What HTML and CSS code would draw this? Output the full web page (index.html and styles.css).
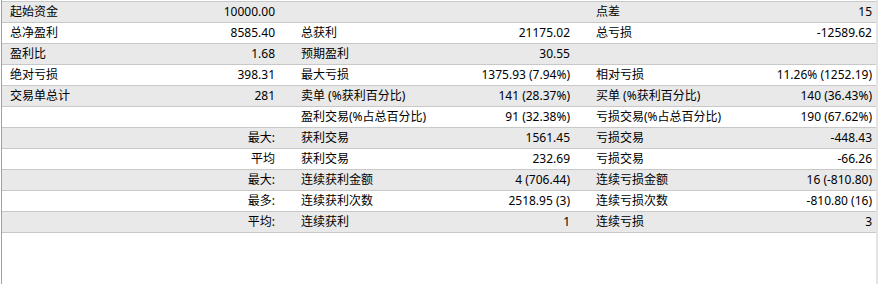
FILE: index.html
```html
<!DOCTYPE html>
<html lang="zh-CN">
<head>
<meta charset="utf-8">
<title>报告</title>
<link rel="stylesheet" href="styles.css">
</head>
<body>
<div class="panel">
  <div class="report">
    <div class="row odd"><span class="lbl">起始资金</span><span class="val">10000.00</span><span class="lbl"></span><span class="val"></span><span class="lbl">点差</span><span class="val last">15</span></div>
    <div class="row"><span class="lbl">总净盈利</span><span class="val">8585.40</span><span class="lbl">总获利</span><span class="val">21175.02</span><span class="lbl">总亏损</span><span class="val last">-12589.62</span></div>
    <div class="row odd"><span class="lbl">盈利比</span><span class="val">1.68</span><span class="lbl">预期盈利</span><span class="val">30.55</span><span class="lbl"></span><span class="val last"></span></div>
    <div class="row"><span class="lbl">绝对亏损</span><span class="val">398.31</span><span class="lbl">最大亏损</span><span class="val">1375.93 (7.94%)</span><span class="lbl">相对亏损</span><span class="val last">11.26% (1252.19)</span></div>
    <div class="row odd"><span class="lbl">交易单总计</span><span class="val">281</span><span class="lbl">卖单 (%获利百分比)</span><span class="val">141 (28.37%)</span><span class="lbl">买单 (%获利百分比)</span><span class="val last">140 (36.43%)</span></div>
    <div class="row"><span class="lbl"></span><span class="val"></span><span class="lbl">盈利交易(%占总百分比)</span><span class="val">91 (32.38%)</span><span class="lbl">亏损交易(%占总百分比)</span><span class="val last">190 (67.62%)</span></div>
    <div class="row odd"><span class="lbl"></span><span class="val">最大:</span><span class="lbl">获利交易</span><span class="val">1561.45</span><span class="lbl">亏损交易</span><span class="val last">-448.43</span></div>
    <div class="row"><span class="lbl"></span><span class="val">平均</span><span class="lbl">获利交易</span><span class="val">232.69</span><span class="lbl">亏损交易</span><span class="val last">-66.26</span></div>
    <div class="row odd"><span class="lbl"></span><span class="val">最大:</span><span class="lbl">连续获利金额</span><span class="val">4 (706.44)</span><span class="lbl">连续亏损金额</span><span class="val last">16 (-810.80)</span></div>
    <div class="row"><span class="lbl"></span><span class="val">最多:</span><span class="lbl">连续获利次数</span><span class="val">2518.95 (3)</span><span class="lbl">连续亏损次数</span><span class="val last">-810.80 (16)</span></div>
    <div class="row odd"><span class="lbl"></span><span class="val">平均:</span><span class="lbl">连续获利</span><span class="val">1</span><span class="lbl">连续亏损</span><span class="val last">3</span></div>
  </div>
</div>
</body>
</html>
```
FILE: styles.css
```css
html, body {
  margin: 0;
  padding: 0;
  background: #ffffff;
}

.panel {
  margin-left: 1px;
  width: 877px;
  height: 284px;
  border-left: 1px solid #a0a0a0;
  border-right: 2px solid #e4e4e4;
  box-sizing: border-box;
  padding-top: 1px;
  background: #ffffff;
}

.report {
  border-top: 1px solid #c8c8c8;
  font-family: "Noto Sans", "Noto Sans CJK SC", sans-serif;
  font-size: 12px;
  color: #000000;
}

.row {
  display: grid;
  grid-template-columns: 140px 151px 140px 155px 140px 148px;
  height: 20px;
  line-height: 20px;
  border-bottom: 1px solid #c8c8c8;
  background: #ffffff;
}

.row.odd {
  background: #e9e9e9;
}

.lbl {
  padding-left: 8px;
  white-space: nowrap;
}

.val {
  text-align: right;
  padding-right: 18px;
  white-space: nowrap;
}

.val.last {
  padding-right: 4px;
}
```
